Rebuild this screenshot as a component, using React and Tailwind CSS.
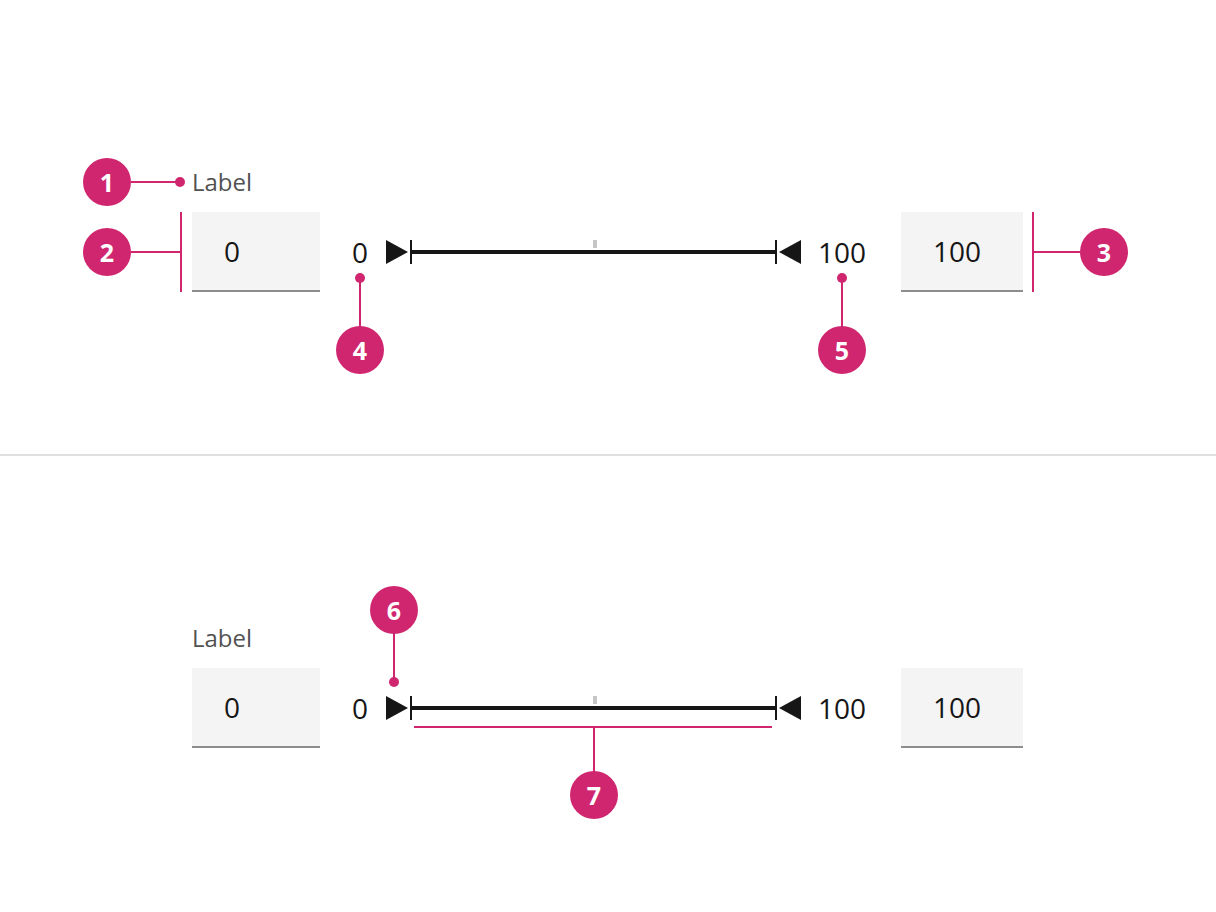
import React from 'react';

const PINK = 'bg-[#d02670]';

const Slider = () => (
  <svg width="415" height="24" viewBox="0 0 415 24" className="shrink-0">
    <polygon points="0,0 22,12 0,24" fill="#161616" />
    <rect x="24" y="0" width="2" height="24" fill="#161616" />
    <rect x="25" y="10" width="365" height="4" fill="#161616" />
    <rect x="207" y="0" width="4" height="8" fill="#c6c6c6" />
    <rect x="389" y="0" width="2" height="24" fill="#161616" />
    <polygon points="415,0 393,12 415,24" fill="#161616" />
  </svg>
);

const NumberInput = ({ value, width }) => (
  <div
    className={`${width} h-[80px] bg-[#f4f4f4] border-b-2 border-[#8d8d8d] pl-[32px] flex items-center text-[28px] text-[#161616]`}
  >
    {value}
  </div>
);

const RangeSlider = () => (
  <div className="flex flex-col gap-[16px]">
    <div className="text-[24px] leading-[28px] text-[#525252]">Label</div>
    <div className="flex items-center h-[80px]">
      <NumberInput value="0" width="w-[128px]" />
      <span className="ml-[32px] w-[34px] text-[28px] text-[#161616]">0</span>
      <Slider />
      <span className="ml-[17px] w-[83px] text-[28px] text-[#161616]">100</span>
      <NumberInput value="100" width="w-[122px]" />
    </div>
  </div>
);

const Badge = ({ n, className }) => (
  <div
    className={`absolute w-12 h-12 rounded-full ${PINK} text-white font-bold text-[25px] leading-none flex items-center justify-center ${className}`}
  >
    {n}
  </div>
);

const Line = ({ className }) => <div className={`absolute ${PINK} ${className}`} />;
const Dot = ({ className }) => <div className={`absolute w-[10px] h-[10px] rounded-full ${PINK} ${className}`} />;

export default function App() {
  return (
    <div
      className="relative w-[1216px] h-[912px] bg-white overflow-hidden"
      style={{ fontFamily: '"Open Sans", "Noto Sans", sans-serif' }}
    >
      <section className="h-[454px] pt-[168px] pl-[192px]">
        <RangeSlider />
      </section>
      <div className="h-[2px] bg-[#e0e0e0]" />
      <section className="h-[456px] pt-[168px] pl-[192px]">
        <RangeSlider />
      </section>

      {/* annotations */}
      <Badge n="1" className="left-[83px] top-[158px]" />
      <Line className="left-[131px] top-[181px] w-[49px] h-[2px]" />
      <Dot className="left-[175px] top-[177px]" />

      <Badge n="2" className="left-[83px] top-[228px]" />
      <Line className="left-[131px] top-[251px] w-[50px] h-[2px]" />
      <Line className="left-[180px] top-[212px] w-[2px] h-[80px]" />

      <Badge n="3" className="left-[1080px] top-[228px]" />
      <Line className="left-[1033px] top-[251px] w-[47px] h-[2px]" />
      <Line className="left-[1032px] top-[212px] w-[2px] h-[80px]" />

      <Dot className="left-[355px] top-[273px]" />
      <Line className="left-[359px] top-[278px] w-[2px] h-[50px]" />
      <Badge n="4" className="left-[336px] top-[326px]" />

      <Dot className="left-[837px] top-[273px]" />
      <Line className="left-[841px] top-[278px] w-[2px] h-[50px]" />
      <Badge n="5" className="left-[818px] top-[326px]" />

      <Badge n="6" className="left-[370px] top-[586px]" />
      <Line className="left-[393px] top-[633px] w-[2px] h-[48px]" />
      <Dot className="left-[389px] top-[677px]" />

      <Line className="left-[414px] top-[726px] w-[358px] h-[2px]" />
      <Line className="left-[593px] top-[727px] w-[2px] h-[46px]" />
      <Badge n="7" className="left-[570px] top-[771px]" />
    </div>
  );
}
